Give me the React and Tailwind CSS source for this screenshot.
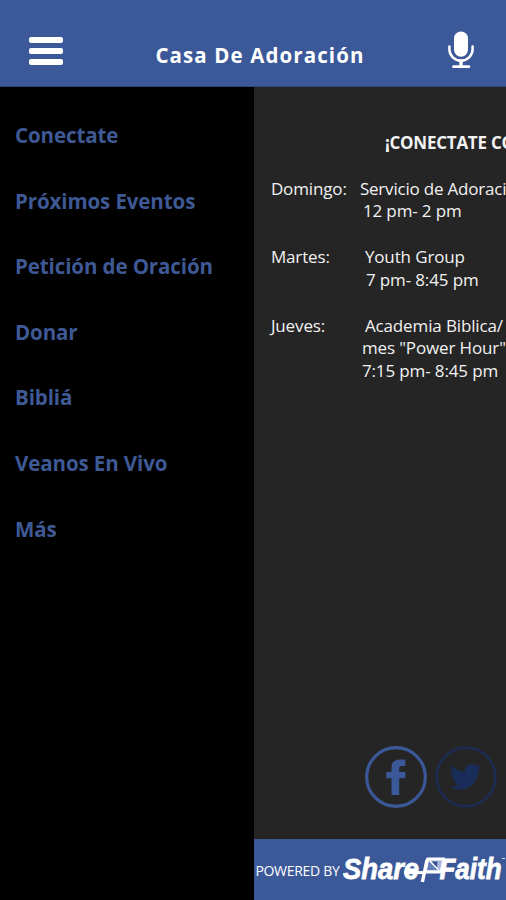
import React, { useState } from 'react';

const menuItems = [
  'Conectate',
  'Próximos Eventos',
  'Petición de Oración',
  'Donar',
  'Bibliá',
  'Veanos En Vivo',
  'Más',
];

const schedule = [
  {
    day: 'Domingo:',
    lines: [
      { text: 'Servicio de Adoración', indent: 'pl-0 tracking-[-0.2px]' },
      { text: '12 pm- 2 pm', indent: 'pl-[3px]' },
    ],
  },
  {
    day: 'Martes:',
    lines: [
      { text: 'Youth Group', indent: 'pl-[5px]' },
      { text: '7 pm- 8:45 pm', indent: 'pl-[6px]' },
    ],
  },
  {
    day: 'Jueves:',
    lines: [
      { text: 'Academia Biblica/', indent: 'pl-[5px]' },
      { text: 'mes "Power Hour"', indent: 'pl-[2px]' },
      { text: '7:15 pm- 8:45 pm', indent: 'pl-[2px]' },
    ],
  },
];

function MicIcon() {
  return (
    <svg width="28" height="38" viewBox="0 0 28 38" fill="none" stroke="white">
      <rect x="7" y="0.4" width="14" height="25.4" rx="7" fill="white" stroke="none" />
      <path d="M2.4 15.5v2.8a11.6 11.3 0 0 0 23.2 0v-2.8" strokeWidth="2.5" strokeLinecap="round" />
      <path d="M14 29.5v6" strokeWidth="3.4" />
      <path d="M6.5 35.7h15.4" strokeWidth="2.8" strokeLinecap="round" />
    </svg>
  );
}

function FacebookIcon() {
  return (
    <svg width="62" height="62" viewBox="0 0 62 62">
      <circle cx="31" cy="31" r="29.3" fill="none" stroke="#3b5998" strokeWidth="3.2" />
      <path
        fill="#3b5998"
        d="M26.5 49V32.3h-5.2v-6.2h5.2v-4.3c0-5.6 3.2-8.4 8.2-8.4h5.6v6.5h-3.4c-2 0-2.7.8-2.7 2.6v3.6h6.2v6.2h-6.2V49z"
      />
    </svg>
  );
}

function TwitterIcon() {
  return (
    <svg width="62" height="62" viewBox="0 0 62 62">
      <circle cx="31" cy="31" r="29.3" fill="none" stroke="#1d2b50" strokeWidth="2.8" />
      <g transform="translate(15.2 15) scale(1.31)">
        <path
          fill="#1a2d5a"
          d="M23.6 4.6a9.6 9.6 0 0 1-2.8.8 4.9 4.9 0 0 0 2.1-2.7 9.8 9.8 0 0 1-3.1 1.2 4.9 4.9 0 0 0-8.4 4.5A13.9 13.9 0 0 1 1.3 3.2a4.9 4.9 0 0 0 1.5 6.5 4.9 4.9 0 0 1-2.2-.6v.1a4.9 4.9 0 0 0 3.9 4.8 4.9 4.9 0 0 1-2.2.1 4.9 4.9 0 0 0 4.6 3.4A9.9 9.9 0 0 1 0 19.5a13.9 13.9 0 0 0 7.5 2.2c9.1 0 14-7.5 14-14v-.6a10 10 0 0 0 2.1-2.5z"
        />
      </g>
    </svg>
  );
}

function ShareFaithLogo() {
  return (
    <svg
      width="163"
      height="36"
      viewBox="0 0 163 36"
      fill="white"
      className="shrink-0 font-['Liberation_Sans',sans-serif] font-bold italic"
    >
      <text x="1" y="27.2" fontSize="29.5" textLength="76" lengthAdjust="spacingAndGlyphs" stroke="white" strokeWidth="0.8">
        Share
      </text>
      {/* flag between the two words */}
      <path d="M85.5 7h16.5l-3 13H83z" fill="#a9b8da" stroke="white" strokeWidth="2.8" strokeLinejoin="round" />
      <path d="M87 9.5l8.5 8.5H85.2z" fill="#6580b9" />
      <path d="M89.5 9.5h6l-0.6 6.5z" fill="#34508d" />
      <path d="M87.5 8.5l9.5 9.8" stroke="white" strokeWidth="1.1" />
      <path d="M62 20.6h22" stroke="white" strokeWidth="3" />
      <path d="M85 8l-4.6 22" stroke="white" strokeWidth="3.4" />
      <text x="97.5" y="27.2" fontSize="29.5" textLength="62" lengthAdjust="spacingAndGlyphs" stroke="white" strokeWidth="0.8">
        Faith
      </text>
      <path d="M160 6.5h3" stroke="white" strokeWidth="0.8" />
    </svg>
  );
}

function Header({ onToggle }) {
  return (
    <header className="h-[87px] shrink-0 bg-[#3b5998] border-b border-[#2c4477] flex items-center justify-between pl-7 pr-[31px] pt-[14px]">
      <button onClick={onToggle} aria-label="Menu" className="flex flex-col gap-[5px] w-[35px] pt-[2px] px-[0.5px] cursor-pointer">
        <span className="h-[6px] rounded-[2px] bg-white" />
        <span className="h-[6px] rounded-[2px] bg-white" />
        <span className="h-[6px] rounded-[2px] bg-white" />
      </button>
      <h1 className="text-white text-[20.5px] font-bold tracking-[1.1px] leading-none pt-[11px] pl-[10px] whitespace-nowrap">
        Casa De Adoración
      </h1>
      <MicIcon />
    </header>
  );
}

function App() {
  const [open, setOpen] = useState(true);

  return (
    <div className="w-[506px] h-[900px] flex flex-col overflow-hidden bg-black font-['Open_Sans',sans-serif]">
      <Header onToggle={() => setOpen(!open)} />

      <div className="flex flex-1 min-h-0">
        {/* Side menu */}
        {open && (
          <nav className="w-[254.4px] shrink-0 bg-black pl-[15px] pt-[15.9px]">
            {menuItems.map((item) => (
              <a key={item} className="h-[65.65px] flex items-start pt-[18px] text-[20.5px] tracking-[-0.1px] leading-[29px] font-bold text-[#3f5995] cursor-pointer">
                {item}
              </a>
            ))}
          </nav>
        )}

        {/* Page behind the menu */}
        <main className="flex-1 min-w-0 flex flex-col overflow-hidden bg-[#252525] text-[#f2f2f2]">
          <div className="pt-[45px] pl-[16.5px] text-[17px] tracking-[-0.13px] leading-[22.85px] whitespace-nowrap">
            <h2 className="pl-[114px] font-bold tracking-[-0.25px]">¡CONECTATE CON</h2>
            <div className="pt-[22.8px] flex flex-col gap-[22.8px]">
              {schedule.map(({ day, lines }) => (
                <div key={day} className="flex">
                  <p className="w-[89px] shrink-0">{day}</p>
                  <div>
                    {lines.map((line) => (
                      <p key={line.text} className={line.indent}>{line.text}</p>
                    ))}
                  </div>
                </div>
              ))}
            </div>
          </div>

          <div className="mt-auto flex gap-2 pl-[110.5px] pb-[31px]">
            <FacebookIcon />
            <TwitterIcon />
          </div>

          <footer className="h-[61px] shrink-0 bg-[#3b5998] flex items-center pl-px text-white">
            <span className="w-[87px] shrink-0 text-[14px] tracking-[-0.3px] whitespace-nowrap pt-[2px]">POWERED BY</span>
            <ShareFaithLogo />
          </footer>
        </main>
      </div>
    </div>
  );
}

export default App;
